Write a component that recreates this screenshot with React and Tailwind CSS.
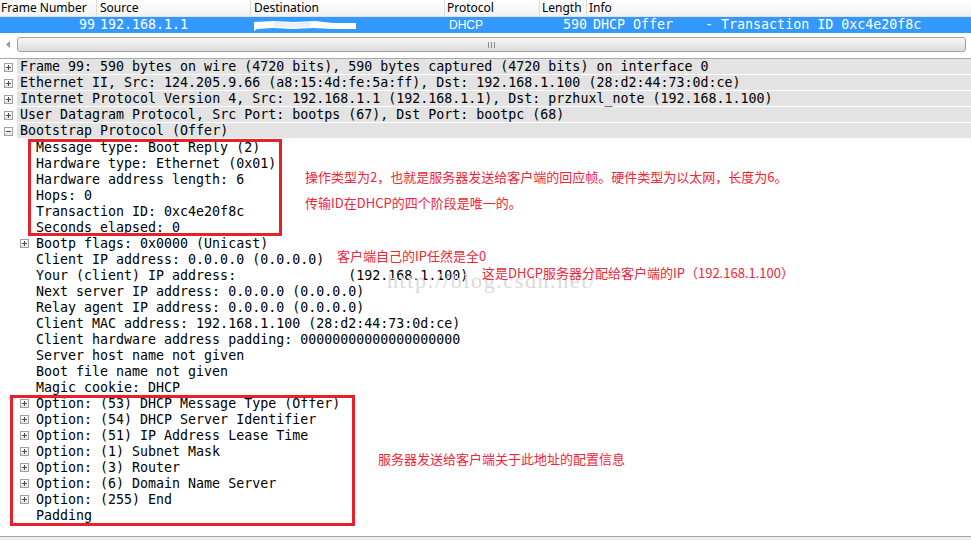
import React from "react";

const mono = { fontFamily: '"DejaVu Sans Mono", "Liberation Mono", monospace' };
const cjk = { fontFamily: '"Noto Sans CJK SC", "Noto Sans", sans-serif' };

const topRows = [
  { text: "Frame 99: 590 bytes on wire (4720 bits), 590 bytes captured (4720 bits) on interface 0" },
  { text: "Ethernet II, Src: 124.205.9.66 (a8:15:4d:fe:5a:ff), Dst: 192.168.1.100 (28:d2:44:73:0d:ce)" },
  { text: "Internet Protocol Version 4, Src: 192.168.1.1 (192.168.1.1), Dst: przhuxl_note (192.168.1.100)" },
  { text: "User Datagram Protocol, Src Port: bootps (67), Dst Port: bootpc (68)" },
  { text: "Bootstrap Protocol (Offer)", open: true },
];

const children = [
  { text: "Message type: Boot Reply (2)" },
  { text: "Hardware type: Ethernet (0x01)" },
  { text: "Hardware address length: 6" },
  { text: "Hops: 0" },
  { text: "Transaction ID: 0xc4e20f8c" },
  { text: "Seconds elapsed: 0" },
  { text: "Bootp flags: 0x0000 (Unicast)", plus: true },
  { text: "Client IP address: 0.0.0.0 (0.0.0.0)" },
  { text: "Your (client) IP address:              (192.168.1.100)" },
  { text: "Next server IP address: 0.0.0.0 (0.0.0.0)" },
  { text: "Relay agent IP address: 0.0.0.0 (0.0.0.0)" },
  { text: "Client MAC address: 192.168.1.100 (28:d2:44:73:0d:ce)" },
  { text: "Client hardware address padding: 00000000000000000000" },
  { text: "Server host name not given" },
  { text: "Boot file name not given" },
  { text: "Magic cookie: DHCP" },
  { text: "Option: (53) DHCP Message Type (Offer)", plus: true },
  { text: "Option: (54) DHCP Server Identifier", plus: true },
  { text: "Option: (51) IP Address Lease Time", plus: true },
  { text: "Option: (1) Subnet Mask", plus: true },
  { text: "Option: (3) Router", plus: true },
  { text: "Option: (6) Domain Name Server", plus: true },
  { text: "Option: (255) End", plus: true },
  { text: "Padding" },
];

function Expander({ open }) {
  return (
    <span className="w-[9px] h-[9px] border border-[#a0a0a0] bg-gradient-to-b from-white to-[#e6e6e6] flex items-center justify-center relative">
      <span className="absolute w-[5px] h-px bg-[#4b4b4b]" />
      {!open && <span className="absolute w-px h-[5px] bg-[#4b4b4b]" />}
    </span>
  );
}

function Note({ className, children }) {
  return (
    <div className={"absolute text-[13px] leading-[16px] text-[#f0243a] whitespace-nowrap " + className} style={cjk}>
      {children}
    </div>
  );
}

export default function App() {
  return (
    <div className="w-[971px] h-[540px] bg-white relative overflow-hidden flex flex-col text-black">
      {/* column headers */}
      <div
        className="h-[17px] flex text-[12px] leading-[16px] bg-gradient-to-b from-white to-[#f2f2f2] border-b border-[#e2e2e2]"
        style={{ fontFamily: '"Noto Sans", "Open Sans", sans-serif' }}
      >
        <div className="w-[97px] pl-[1px] border-r border-[#dcdcdc]">Frame Number</div>
        <div className="w-[154px] pl-[3px] border-r border-[#dcdcdc]">Source</div>
        <div className="w-[194px] pl-[3px] border-r border-[#dcdcdc]">Destination</div>
        <div className="w-[95px] pl-[2px] border-r border-[#dcdcdc]">Protocol</div>
        <div className="w-[47px] pl-[2px] border-r border-[#dcdcdc]">Length</div>
        <div className="flex-1 pl-[2px]">Info</div>
      </div>

      {/* selected packet row */}
      <div className="h-[16px] flex bg-[#3399ff] text-white leading-[16px] text-[13.3px]" style={mono}>
        <div className="w-[97px] text-right pr-[2px]">99</div>
        <div className="w-[154px] pl-[3px]">192.168.1.1</div>
        <div className="w-[194px] pl-[2px] flex items-center">
          <svg width="104" height="12" viewBox="0 0 104 12">
            <path d="M1 3 L20 2 L40 3 L62 2 L80 4 L103 4 L103 10 L80 10 L60 9 L40 10 L20 9 L4 10 L1 12 Z" fill="#ffffff" />
            <path d="M20 3 L40 4 L58 3 L58 8 L40 8 L20 8 Z" fill="#e8f2ff" />
          </svg>
        </div>
        <div
          className="w-[95px] pl-[4px] text-[12px]"
          style={{ fontFamily: '"Liberation Sans", Arial, sans-serif' }}
        >
          DHCP
        </div>
        <div className="w-[47px] text-right">590</div>
        <div className="flex-1 pl-[6px] whitespace-pre">DHCP Offer    - Transaction ID 0xc4e20f8c</div>
      </div>

      {/* horizontal scrollbar */}
      <div className="h-[25px] flex items-start pt-[4px]">
        <div className="w-[17px] h-[15px] flex items-center justify-center">
          <svg width="6" height="7" viewBox="0 0 6 7">
            <path d="M4 0 L0 3.5 L4 7 Z" fill="#9a9a9a" />
          </svg>
        </div>
        <div className="w-[949px] h-[15px] rounded-[3px] border border-[#a3a3a3] bg-gradient-to-b from-[#f7f7f7] to-[#dcdcdc] flex items-center justify-center gap-[2px]">
          <span className="w-px h-[6px] bg-[#8a8a8a]" />
          <span className="w-px h-[6px] bg-[#8a8a8a]" />
          <span className="w-px h-[6px] bg-[#8a8a8a]" />
        </div>
      </div>

      {/* packet details tree */}
      <div className="flex-1 border-t border-[#a8a8a8] flex flex-col text-[13.3px] leading-[16px]" style={mono}>
        {topRows.map((r) => (
          <div key={r.text} className="h-[16px] flex items-stretch">
            <div className="w-[17px] flex items-center pl-[4px]">
              <Expander open={r.open} />
            </div>
            <div className="flex-1 bg-[#e3e3e3] border-b border-white pl-[3px] pt-px whitespace-pre leading-[14px]">
              {r.text}
            </div>
          </div>
        ))}
        {children.map((c, i) => (
          <div key={i} className="h-[16px] flex items-center">
            <div className="w-[36px] flex items-center pl-[20px]">{c.plus && <Expander />}</div>
            <div className="whitespace-pre pt-px">{c.text}</div>
          </div>
        ))}
      </div>

      {/* bottom pane edge */}
      <div className="h-[4px] border-t border-[#a8a8a8] bg-[#efefef]" />

      {/* watermark */}
      <div
        className="absolute left-[387px] top-[264px] text-[22px] tracking-[1.6px] text-[#dadada] whitespace-nowrap"
        style={{ fontFamily: '"Liberation Serif", "DejaVu Serif", serif' }}
      >
        http://blog.csdn.net/
      </div>

      {/* red highlight boxes */}
      <div className="absolute left-[28px] top-[139px] w-[254px] h-[97px] border-[3px] border-[#e8202a]" />
      <div className="absolute left-[10px] top-[395px] w-[345px] h-[131px] border-[3px] border-[#e8202a]" />

      {/* annotations */}
      <Note className="left-[305px] top-[169px]">操作类型为2，也就是服务器发送给客户端的回应帧。硬件类型为以太网，长度为6。</Note>
      <Note className="left-[305px] top-[195px]">传输ID在DHCP的四个阶段是唯一的。</Note>
      <Note className="left-[337px] top-[248px]">客户端自己的IP任然是全0</Note>
      <Note className="left-[482px] top-[265px]">这是DHCP服务器分配给客户端的IP（192.168.1.100）</Note>
      <Note className="left-[378px] top-[451px]">服务器发送给客户端关于此地址的配置信息</Note>
    </div>
  );
}
